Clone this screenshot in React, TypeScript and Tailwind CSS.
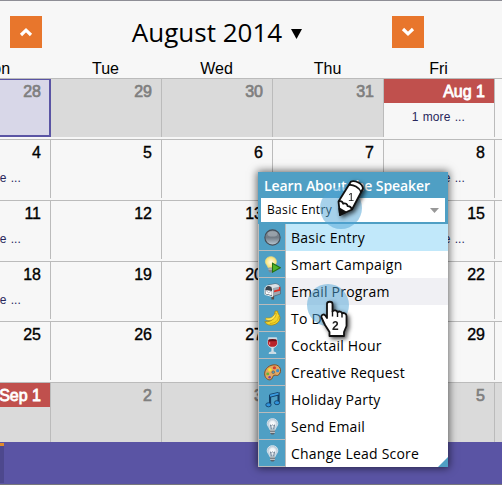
import type { ReactNode } from 'react';

type Tone = 'plain' | 'muted' | 'today' | 'first' | 'firstMuted';
type Cell = { label: string; tone: Tone; more?: boolean };

const DAYS = ['Mon', 'Tue', 'Wed', 'Thu', 'Fri', ''];

const c = (label: string, tone: Tone = 'plain', more = false): Cell => ({ label, tone, more });

const WEEKS: Cell[][] = [
  [c('28', 'today'), c('29', 'muted'), c('30', 'muted'), c('31', 'muted'), c('Aug 1', 'first', true), c('')],
  [c('4', 'plain', true), c('5'), c('6'), c('7'), c('8', 'plain', true), c('')],
  [c('11', 'plain', true), c('12'), c('13'), c('14'), c('15', 'plain', true), c('')],
  [c('18', 'plain', true), c('19'), c('20'), c('21'), c('22'), c('')],
  [c('25'), c('26'), c('27'), c('28'), c('29'), c('')],
  [c('Sep 1', 'firstMuted'), c('2', 'muted'), c('3', 'muted'), c('4', 'muted'), c('5', 'muted'), c('', 'muted')],
];

const ROW_HEIGHTS = ['h-[61px]', 'h-[61px]', 'h-[61px]', 'h-[60px]', 'h-[61px]', 'h-[60px]'];

const CELL_STYLE: Record<Tone, string> = {
  plain: 'bg-[#f7f7f7] text-black [-webkit-text-stroke:0.35px]',
  muted: 'bg-[#dadada] text-[#7f7f7f] [-webkit-text-stroke:0.7px]',
  today: 'bg-[#d8d7e8] text-[#7f7f7f] [-webkit-text-stroke:0.7px] border-t-1 border-r-2 border-b-2 border-[#5a54a4]',
  first: 'bg-[#f7f7f7] text-white [-webkit-text-stroke:0.8px]',
  firstMuted: 'bg-[#dadada] text-white [-webkit-text-stroke:0.8px]',
};

function DayCell({ cell }: { cell: Cell }) {
  const first = cell.tone === 'first' || cell.tone === 'firstMuted';
  const today = cell.tone === 'today';
  return (
    <div className={`min-w-0 overflow-hidden whitespace-nowrap ${CELL_STYLE[cell.tone]} ${today ? '' : 'border-r border-[#bbbbbb]'}`}>
      <div
        className={`h-6 text-right text-[16px] ${today ? 'pr-[8px] leading-6' : 'pr-[9px] leading-[26px]'} ${first ? 'bg-[#c0504d]' : ''}`}
      >
        {cell.label}
      </div>
      {cell.more && (
        <div className="pt-[6px] pr-[29px] text-right text-[12px] leading-4 tracking-[0.1px] text-[#28265c] [-webkit-text-stroke:0px] [word-spacing:0.8px]">
          1 more ...
        </div>
      )}
    </div>
  );
}

function Chevron({ up }: { up?: boolean }) {
  return (
    <button className="flex size-8 items-center justify-center bg-[#e8762c]">
      <svg width="14" height="10" viewBox="0 0 14 10" fill="none" stroke="white" strokeWidth="3.200">
        <path d={up ? 'M2 8 7 3.200l5 4.800' : 'M2 2l5 4.800 5-4.800'} />
      </svg>
    </button>
  );
}

function Bulb() {
  return (
    <g>
      <path d="M8 .6c-3 0-5 2-5 4.800 0 2.200 2 3.200 2.400 5.400h5.200C11 8.600 13 7.600 13 5.400 13 2.600 11 .6 8 .6Z" fill="url(#glass)" stroke="#dde8f0" strokeWidth=".8" />
      <path d="M7 10.500 6 6.500l1 .8 1-.8 1 .8 1-.8-1 4" fill="none" stroke="#66788c" strokeWidth=".8" />
      <path d="M5.700 11h4.600v3L9 15.600H7L5.700 14Z" fill="#5c636a" />
      <path d="M5.700 12h4.600M5.700 13.600h4.600" stroke="#e6ebee" strokeWidth=".7" />
    </g>
  );
}

const ICONS: Record<string, ReactNode> = {
  ball: (
    <g>
      <circle cx="8" cy="8" r="7.200" fill="url(#ball)" stroke="#434c56" strokeWidth="1" />
      <ellipse cx="8" cy="4.600" rx="4.700" ry="2.500" fill="#d5dce2" opacity=".35" />
    </g>
  ),
  campaign: (
    <g>
      <path d="M6.500.6c-3 0-5.200 2-5.200 4.900 0 2.300 2.100 3.300 2.500 5.500h5.400c.4-2.200 2.500-3.200 2.500-5.500C11.700 2.600 9.500.6 6.500.6Z" fill="url(#yellow)" stroke="#f1dc83" strokeWidth=".6" />
      <path d="M4.200 11h4.600v3l-1.300 1.500h-2L4.200 14Z" fill="#7f878e" />
      <path d="M4.200 12.300h4.600" stroke="#e6ebee" strokeWidth=".7" />
      <path d="m8 6.800 7.300 4.300L8 15.200Z" fill="#4fb52a" stroke="#26700f" />
    </g>
  ),
  mailbox: (
    <g strokeLinejoin="round">
      <path d="M7 11h2.500v4.500H7Z" fill="#5f4a40" />
      <path d="M3.500 2 10.500.8c3.200 0 5 2 5 5v4.500L8 12.800Z" fill="#9da7b0" stroke="#4d5864" strokeWidth=".6" />
      <path d="m4 2 6.500-1c2 0 3.500 1 4.300 2.300L8 5Z" fill="#dbe1e6" />
      <path d="M.8 10.800V6c0-4.800 7.200-4.800 7.200 0v6.800Z" fill="#39434e" stroke="#eef2f5" strokeWidth=".9" />
      <path d="m1.500 6.500 5.800 1v4l-5.800-1.400Z" fill="#fff" />
      <path d="m1.500 6.500 2.800 2.700L7.300 7.500" stroke="#7587a0" strokeWidth=".6" fill="none" />
      <path d="m9.500 7 4.500-1.200V4l1.300-.3v3.600L9.500 8.700Z" fill="#e3291f" />
    </g>
  ),
  banana: (
    <g strokeLinejoin="round">
      <path d="M10.500 1h2.300c-.3 2 1.900 3.500 2.200 6 .3 4-4.200 7.700-9.200 7.200-2.500-.2-4.500-1.700-5-3.200 4 .5 7-1 8.500-4 .8-2 .5-4 1.200-6Z" fill="#f5d629" stroke="#a78408" strokeWidth=".7" />
      <path d="M10.500 3C8.500 7 6 8 2 7.500c-.8.500-.5 1.500.3 2C7 11 11 8.500 11.500 3Z" fill="#ffe75a" stroke="#b3900d" strokeWidth=".6" />
      <path d="M13.500 6c.2 4-3 6.500-8 6.700" stroke="#c59e10" strokeWidth=".7" fill="none" />
    </g>
  ),
  wine: (
    <g>
      <path d="M4.200.6h7.600l.7 4.500c.3 3-1.800 4.700-3.800 4.900v3.700l2.600 1.200v.8H4.700v-.8l2.600-1.200V10c-2-.2-4.100-1.900-3.800-4.900Z" fill="#cbd9e2" stroke="#edf3f6" strokeWidth=".5" />
      <path d="M3.900 3h8.200l.3 2.300c.1 2.700-2.200 3.900-4.400 3.900S3.500 8 3.600 5.300Z" fill="#b8232b" />
      <ellipse cx="8" cy="3" rx="4" ry="1.100" fill="#681018" />
      <path d="M5.300 5v2" stroke="#f29292" strokeWidth="1" />
    </g>
  ),
  palette: (
    <g>
      <path d="M10.500.8C5 .5.600 4.500.6 9.200c0 3.700 2.700 6 5.200 5.700 2.700-.4 1.500-3.400 3.700-4.200 1.700-.7 3 1 4.400-.6C17.700 6 14.700 1 10.500.8Z" fill="#e0a763" stroke="#7f4a1e" strokeWidth=".9" />
      <circle cx="5.500" cy="5.500" r="1.700" fill="#f4e12d" />
      <circle cx="9.800" cy="3.500" r="1.500" fill="#d43b2d" />
      <circle cx="12.900" cy="6.300" r="1.500" fill="#3d8ed0" />
      <circle cx="3.500" cy="9.300" r="1.400" fill="#64b23c" />
      <circle cx="8.700" cy="7.700" r="1.300" fill="#4e9dc2" stroke="#7f4a1e" strokeWidth=".5" />
      <circle cx="5.300" cy="12.500" r="1.200" fill="#7b3da1" />
    </g>
  ),
  music: (
    <g>
      <path d="M5.700 13V4.500L13.700 2.500V11" fill="none" stroke="#123e65" strokeWidth="2" />
      <path d="M5.700 4.500 13.700 2.500" stroke="#123e65" strokeWidth="3.400" />
      <path d="M5.700 4.500 13.700 2.500" stroke="#3a9be0" strokeWidth="1.800" />
      <ellipse cx="4.200" cy="13" rx="2.500" ry="1.900" fill="#2f93dc" stroke="#123e65" strokeWidth=".8" />
      <ellipse cx="12.200" cy="11" rx="2.500" ry="1.900" fill="#2f93dc" stroke="#123e65" strokeWidth=".8" />
    </g>
  ),
  bulb: <Bulb />,
};

const ENTRIES = [
  { label: 'Basic Entry', icon: 'ball', bg: 'bg-[#c1e8fa]' },
  { label: 'Smart Campaign', icon: 'campaign', bg: 'bg-white' },
  { label: 'Email Program', icon: 'mailbox', bg: 'bg-[#f0f0f4]' },
  { label: 'To Do', icon: 'banana', bg: 'bg-white' },
  { label: 'Cocktail Hour', icon: 'wine', bg: 'bg-white' },
  { label: 'Creative Request', icon: 'palette', bg: 'bg-white' },
  { label: 'Holiday Party', icon: 'music', bg: 'bg-white' },
  { label: 'Send Email', icon: 'bulb', bg: 'bg-white' },
  { label: 'Change Lead Score', icon: 'bulb', bg: 'bg-white' },
];

function Gradients() {
  return (
    <svg width="0" height="0" className="absolute">
      <defs>
        <linearGradient id="ball" x2="0" y2="1">
          <stop stopColor="#7d8790" />
          <stop offset=".5" stopColor="#727c86" />
          <stop offset="1" stopColor="#bccbd6" />
        </linearGradient>
        <radialGradient id="glass">
          <stop stopColor="#fff" />
          <stop offset=".5" stopColor="#eef3f7" />
          <stop offset="1" stopColor="#a9bbcc" />
        </radialGradient>
        <radialGradient id="yellow">
          <stop stopColor="#fffef0" />
          <stop offset="1" stopColor="#f8e06a" />
        </radialGradient>
      </defs>
    </svg>
  );
}

function EntryPopup() {
  return (
    <div className="absolute top-[172px] left-[258px] z-10 w-[190px] bg-[#4f9fc4] font-['Open_Sans',sans-serif] shadow-[0_0_8px_1px_rgba(0,0,0,0.6)]">
      <div className="h-[26px] pl-[6px] text-[14px] leading-[27px] font-semibold tracking-[-0.08px] whitespace-nowrap text-white">
        Learn About the Speaker
      </div>
      <div className="mx-[3px] flex h-6 items-center justify-between bg-white pr-[6px] pl-[6px] text-[12px] leading-6 tracking-[0.35px] text-black">
        Basic Entry
        <svg width="9" height="5" viewBox="0 0 9 5">
          <path d="M0 0h9L4.500 5Z" fill="#989898" />
        </svg>
      </div>
      <div className="flex flex-col pt-[2px]">
        {ENTRIES.map((e) => (
          <div key={e.label} className={`flex h-[27px] ${e.bg}`}>
            <div className="flex w-[28px] items-center justify-center border-x border-b border-[#bbbbbb] bg-[#4f9fc4]">
              <svg width="17" height="17" viewBox="0 0 16 16">
                {ICONS[e.icon]}
              </svg>
            </div>
            <div className="pl-[5px] text-[14px] leading-[27px] tracking-[0.22px] whitespace-nowrap text-black">{e.label}</div>
          </div>
        ))}
      </div>
      <svg className="absolute right-0 bottom-0" width="10" height="10" viewBox="0 0 10 10">
        <path d="M10 0v10H0Z" fill="#4f9fc4" />
      </svg>
    </div>
  );
}

function PencilMarker() {
  return (
    <div className="absolute top-[178px] left-[320px] z-20">
      <div className="absolute top-[9px] left-0 size-[42px] rounded-full bg-[#4da3d5]/50" />
      <svg className="relative drop-shadow-[2px_2px_2px_rgba(0,0,0,0.7)]" width="46" height="42" viewBox="0 0 46 42">
        <g stroke="#111" strokeWidth="1.800" strokeLinejoin="round">
          <path d="M20 37 18.500 23.500 31 3.500c4-1.500 11.500 2 12 7L32 31.500Z" fill="#fff" />
          <path d="M18.500 23.500c2.200-.8 3.900 0 4.700 2.200 2.200-.8 4.200.3 4.400 2.500 1.800-.2 3.600 1 4.400 3.300M29 7c4-.8 10.500 2.500 12 7" fill="none" />
          <path d="m20 37-.6-6.500 6 3.500Z" fill="#111" />
        </g>
        <text x="28" y="22.500" fontSize="11" fontFamily="Liberation Sans, sans-serif" fill="#111">
          1
        </text>
      </svg>
    </div>
  );
}

function HandMarker() {
  return (
    <div className="absolute top-[284px] left-[307px] z-20">
      <div className="absolute top-0 left-0 size-[42px] rounded-full bg-[#4da3d5]/50" />
      <svg className="relative drop-shadow-[2px_2px_2px_rgba(0,0,0,0.7)]" width="46" height="56" viewBox="0 0 46 56">
        <path
          d="M20 20c0-3 5.500-3 5.500 0v7.500c1.200-1.800 4.500-1.500 5 .8 1.200-1.300 4-1 4.500 1 2-.8 4.500.3 4.500 2.700v10l-2.500 6v4H22.500V48l-4.500-7-3.500-7.500c-.8-2.800 2.500-4 4-1.800l1.500 2.300Z"
          fill="#fff"
          stroke="#111"
          strokeWidth="1.800"
          strokeLinejoin="round"
        />
        <path d="M25.500 27v5.500M30.500 28.500v4.500M35 29.500v4" stroke="#111" strokeWidth="1.400" />
        <text x="25" y="46" fontSize="12" fontWeight="700" fontFamily="Liberation Sans, sans-serif" fill="#222">
          2
        </text>
      </svg>
    </div>
  );
}

export default function App() {
  return (
    <div className="relative flex h-[485px] w-[502px] flex-col overflow-hidden bg-[#f7f7f7] font-['Liberation_Sans',Arial,sans-serif]">
      <Gradients />
      <div className="h-px shrink-0 bg-[#8e8e96]" />
      <header className="flex h-[58px] shrink-0 items-start justify-between pt-[15px] pr-[78px] pl-[10px]">
        <Chevron up />
        <div className="flex items-center gap-[9px] font-['Open_Sans',sans-serif] text-[26px] leading-8 text-black">
          August 2014
          <svg width="11" height="10" viewBox="0 0 11 10" className="mt-1">
            <path d="M0 0h11L5.500 10Z" />
          </svg>
        </div>
        <Chevron />
      </header>
      <div className="-ml-[61px] grid h-[19px] shrink-0 grid-cols-[111px_111px_111px_111px_111px_8px] text-center text-[16px] leading-5 text-black">
        {DAYS.map((d, i) => (
          <div key={i}>{d}</div>
        ))}
      </div>
      {WEEKS.map((week, i) => (
        <div
          key={i}
          className={`-ml-[60px] grid shrink-0 grid-cols-[111px_111px_111px_111px_111px_8px] border-t border-[#bbbbbb] ${i < 5 ? 'pb-[2px]' : ''} ${ROW_HEIGHTS[i]}`}
        >
          {week.map((cell, j) => (
            <DayCell key={j} cell={cell} />
          ))}
        </div>
      ))}
      <div className="flex h-[42px] shrink-0 items-start bg-[#5a54a4]">
        <div className="mt-px h-[40px] w-1 border-t-3 border-[#e08a2c] bg-[#4d488d]" />
      </div>
      <div className="h-px shrink-0 bg-[#77777c]" />
      <EntryPopup />
      <PencilMarker />
      <HandMarker />
    </div>
  );
}
